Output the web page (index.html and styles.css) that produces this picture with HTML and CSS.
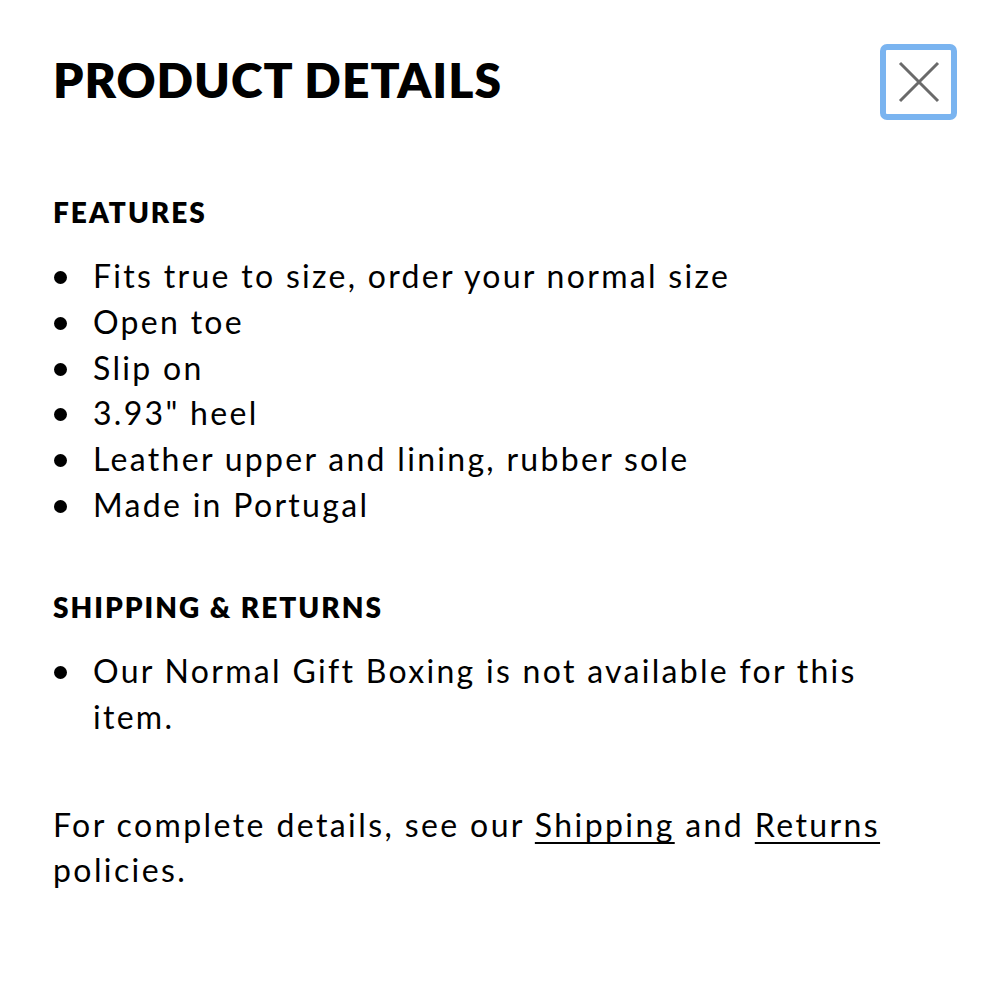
FILE: index.html
```html
<!DOCTYPE html>
<html>
<head>
<meta charset="utf-8">
<link rel="stylesheet" href="styles.css">
</head>
<body>
<div class="panel">
  <header class="head">
    <h1 class="title">PRODUCT DETAILS</h1>
    <button class="close" aria-label="Close">
      <svg width="44" height="44" viewBox="0 0 44 44"><path d="M3 3 L41 41 M41 3 L3 41" stroke="#6a6a6a" stroke-width="3" fill="none"/></svg>
    </button>
  </header>
  <section class="sec">
    <h2 class="sec-title">FEATURES</h2>
    <ul class="list">
      <li>Fits true to size, order your normal size</li>
      <li>Open toe</li>
      <li>Slip on</li>
      <li>3.93" heel</li>
      <li>Leather upper and lining, rubber sole</li>
      <li>Made in Portugal</li>
    </ul>
  </section>
  <section class="sec sec2">
    <h2 class="sec-title">SHIPPING &amp; RETURNS</h2>
    <ul class="list">
      <li>Our Normal Gift Boxing is not available for this item.</li>
    </ul>
  </section>
  <p class="note">For complete details, see our <a href="#">Shipping</a> and <a href="#">Returns</a> policies.</p>
</div>
</body>
</html>
```
FILE: styles.css
```css
html, body { margin: 0; padding: 0; background: #fff; }
body { font-family: Lato, "Noto Sans", sans-serif; color: #000; }
.panel { padding: 44px 43px 0 53px; }
.head { display: flex; justify-content: space-between; align-items: flex-start; }
.title { margin: 0; padding-top: 8px; font-size: 48px; font-weight: 800; letter-spacing: 1px; line-height: 56px; }
.close { width: 77px; height: 76px; box-sizing: border-box; border: 6px solid #7ab4f0; border-radius: 7px; background: #fff; padding: 0; display: flex; align-items: center; justify-content: center; }
.sec { margin-top: 74px; }
.sec2 { margin-top: 61px; }
.sec-title { margin: 0; font-size: 28px; font-weight: 800; line-height: 36px; letter-spacing: 2px; }
.list { list-style: none; margin: 23px 0 0; padding: 0; font-size: 32px; line-height: 45.8px; letter-spacing: 2.3px; max-width: 820px; }
.list li { display: flex; align-items: flex-start; }
.list li::before { content: ""; flex: 0 0 13px; height: 13px; border-radius: 50%; background: #000; margin: 18px 26px 0 1px; }
.note { margin: 63px 0 0; font-size: 32px; line-height: 45px; letter-spacing: 2.4px; max-width: 880px; }
.note a { color: #000; text-decoration: underline; text-underline-offset: 5px; text-decoration-thickness: 2px; }
```
